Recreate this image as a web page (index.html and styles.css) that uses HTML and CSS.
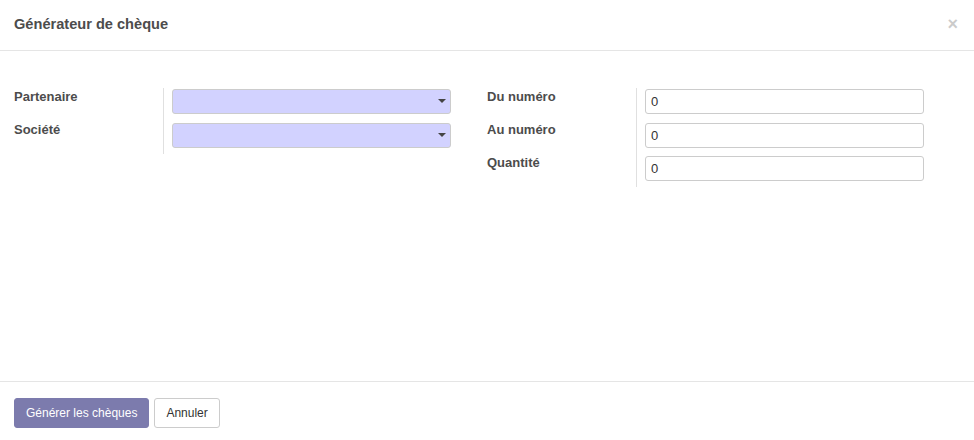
FILE: index.html
```html
<!DOCTYPE html>
<html lang="fr">
<head>
<meta charset="utf-8">
<title>Générateur de chèque</title>
<link rel="stylesheet" href="styles.css">
</head>
<body>
<div class="modal">
  <header class="modal-header">
    <h4 class="modal-title">Générateur de chèque</h4>
    <button class="close" type="button">×</button>
  </header>
  <main class="modal-body">
    <div class="group">
      <div class="labels">
        <label class="lbl">Partenaire</label>
        <label class="lbl">Société</label>
      </div>
      <div class="fields">
        <div class="select"><span class="caret"></span></div>
        <div class="select"><span class="caret"></span></div>
      </div>
    </div>
    <div class="group">
      <div class="labels">
        <label class="lbl">Du numéro</label>
        <label class="lbl">Au numéro</label>
        <label class="lbl">Quantité</label>
      </div>
      <div class="fields">
        <input class="input" type="text" value="0">
        <input class="input" type="text" value="0">
        <input class="input" type="text" value="0">
      </div>
    </div>
  </main>
  <footer class="modal-footer">
    <button class="btn btn-primary" type="button">Générer les chèques</button>
    <button class="btn btn-default" type="button">Annuler</button>
  </footer>
</div>
</body>
</html>
```
FILE: styles.css
```css
* { box-sizing: border-box; }
html, body { margin: 0; padding: 0; background: #fff; }
body {
  font-family: "Liberation Sans", Arial, Helvetica, sans-serif;
  font-size: 13px;
  color: #4c4c4c;
}
.modal {
  width: 974px;
  height: 440px;
  display: flex;
  flex-direction: column;
}
.modal-header {
  height: 51px;
  border-bottom: 1px solid #e5e5e5;
  display: flex;
  align-items: flex-start;
  justify-content: space-between;
  padding: 14px 14px 0 14px;
}
.modal-title {
  margin: 0;
  font-size: 14.6px;
  font-weight: bold;
  line-height: 20px;
  color: #4c4c4c;
}
.close {
  border: 0;
  background: none;
  padding: 0;
  margin: 1px 2px 0 0;
  font-family: "Liberation Sans", Arial, sans-serif;
  font-size: 18px;
  font-weight: bold;
  line-height: 18px;
  color: #000;
  opacity: .2;
}
.modal-body {
  flex: 1;
  display: flex;
  align-items: flex-start;
  gap: 36px;
  padding: 37px 14px 0 14px;
}
.group {
  display: flex;
  width: 437px;
}
.labels {
  width: 149px;
  display: flex;
  flex-direction: column;
}
.lbl {
  font-weight: bold;
  height: 33px;
  line-height: 18px;
}
.fields {
  flex: 1;
  border-left: 1px solid #e0e0e0;
  padding: 1px 0 6px 8px;
  display: flex;
  flex-direction: column;
  gap: 8.5px;
}
.select, .input {
  width: 279px;
  height: 25px;
  border: 1px solid #ccc;
  border-radius: 3px;
}
.select {
  background: #d2d2ff;
  position: relative;
}
.caret {
  position: absolute;
  right: 4px;
  top: 9px;
  width: 0;
  height: 0;
  border-left: 4px solid transparent;
  border-right: 4px solid transparent;
  border-top: 4px solid #444;
}
.input {
  background: #fff;
  font-family: "Liberation Sans", Arial, sans-serif;
  font-size: 13px;
  color: #333;
  padding: 0 5px;
  outline: none;
}
.modal-footer {
  height: 59px;
  border-top: 1px solid #e5e5e5;
  display: flex;
  align-items: flex-start;
  gap: 5px;
  padding: 16px 14px 0 14px;
}
.btn {
  height: 30px;
  font-family: "Liberation Sans", Arial, sans-serif;
  font-size: 12px;
  border-radius: 3px;
  padding: 0 11px;
  line-height: 28px;
  white-space: nowrap;
  cursor: pointer;
}
.btn-primary {
  background: #7c7bad;
  border: 1px solid #7c7bad;
  color: #fff;
}
.btn-default {
  background: #fff;
  border: 1px solid #ccc;
  color: #333;
}
```
